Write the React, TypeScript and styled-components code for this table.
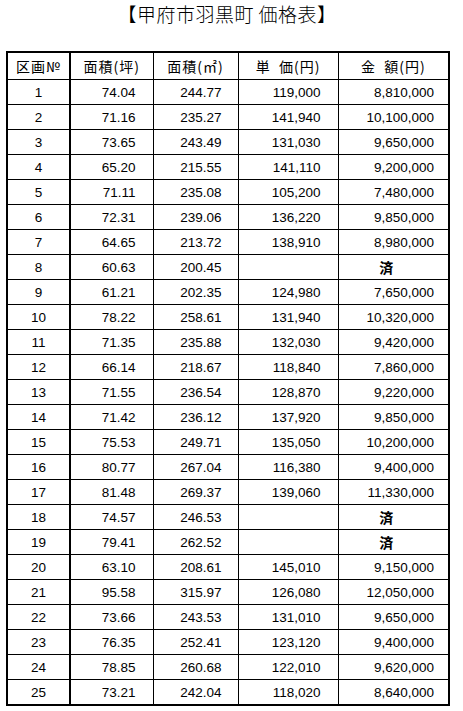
import styled, { createGlobalStyle } from 'styled-components';

interface Lot {
  no: number;
  tsubo: string;
  sqm: string;
  unit: string;
  total: string;
}

const lots: Lot[] = [
  { no: 1, tsubo: '74.04', sqm: '244.77', unit: '119,000', total: '8,810,000' },
  { no: 2, tsubo: '71.16', sqm: '235.27', unit: '141,940', total: '10,100,000' },
  { no: 3, tsubo: '73.65', sqm: '243.49', unit: '131,030', total: '9,650,000' },
  { no: 4, tsubo: '65.20', sqm: '215.55', unit: '141,110', total: '9,200,000' },
  { no: 5, tsubo: '71.11', sqm: '235.08', unit: '105,200', total: '7,480,000' },
  { no: 6, tsubo: '72.31', sqm: '239.06', unit: '136,220', total: '9,850,000' },
  { no: 7, tsubo: '64.65', sqm: '213.72', unit: '138,910', total: '8,980,000' },
  { no: 8, tsubo: '60.63', sqm: '200.45', unit: '', total: '' },
  { no: 9, tsubo: '61.21', sqm: '202.35', unit: '124,980', total: '7,650,000' },
  { no: 10, tsubo: '78.22', sqm: '258.61', unit: '131,940', total: '10,320,000' },
  { no: 11, tsubo: '71.35', sqm: '235.88', unit: '132,030', total: '9,420,000' },
  { no: 12, tsubo: '66.14', sqm: '218.67', unit: '118,840', total: '7,860,000' },
  { no: 13, tsubo: '71.55', sqm: '236.54', unit: '128,870', total: '9,220,000' },
  { no: 14, tsubo: '71.42', sqm: '236.12', unit: '137,920', total: '9,850,000' },
  { no: 15, tsubo: '75.53', sqm: '249.71', unit: '135,050', total: '10,200,000' },
  { no: 16, tsubo: '80.77', sqm: '267.04', unit: '116,380', total: '9,400,000' },
  { no: 17, tsubo: '81.48', sqm: '269.37', unit: '139,060', total: '11,330,000' },
  { no: 18, tsubo: '74.57', sqm: '246.53', unit: '', total: '' },
  { no: 19, tsubo: '79.41', sqm: '262.52', unit: '', total: '' },
  { no: 20, tsubo: '63.10', sqm: '208.61', unit: '145,010', total: '9,150,000' },
  { no: 21, tsubo: '95.58', sqm: '315.97', unit: '126,080', total: '12,050,000' },
  { no: 22, tsubo: '73.66', sqm: '243.53', unit: '131,010', total: '9,650,000' },
  { no: 23, tsubo: '76.35', sqm: '252.41', unit: '123,120', total: '9,400,000' },
  { no: 24, tsubo: '78.85', sqm: '260.68', unit: '122,010', total: '9,620,000' },
  { no: 25, tsubo: '73.21', sqm: '242.04', unit: '118,020', total: '8,640,000' },
];

const GlobalStyle = createGlobalStyle`
  html, body {
    margin: 0;
    padding: 0;
    background: #ffffff;
  }
`;

const Page = styled.div`
  width: 463px;
  padding: 0 0 0 6px;
  box-sizing: border-box;
  font-family: "Noto Sans CJK JP", "Liberation Sans", sans-serif;
  color: #000;
`;

const Title = styled.h1`
  width: 442px;
  margin: 0 0 23px;
  height: 28px;
  line-height: 28px;
  text-align: center;
  font-size: 19px;
  font-weight: 300;
  letter-spacing: 0.5px;
`;

const Table = styled.table`
  width: 442px;
  table-layout: fixed;
  border-collapse: collapse;
  border: 2px solid #000;
`;

const HeadCell = styled.th<{ $first?: boolean }>`
  height: 26px;
  padding: 0;
  border: 1px solid #000;
  border-right-width: ${p => (p.$first ? '2px' : '1px')};
  font-size: 14px;
  font-weight: 400;
  letter-spacing: 1px;
  text-align: center;
  white-space: pre;
`;

const Cell = styled.td<{ $first?: boolean; $pad?: number }>`
  height: 24px;
  padding: 0 ${p => (p.$pad ?? 0)}px 0 0;
  border: 1px solid #000;
  border-right-width: ${p => (p.$first ? '2px' : '1px')};
  font-family: "Liberation Sans", sans-serif;
  font-size: 13.5px;
  text-align: ${p => (p.$first ? 'center' : 'right')};
  white-space: nowrap;
`;

const SoldCell = styled.td`
  height: 24px;
  padding: 0 14px 0 0;
  border: 1px solid #000;
  font-size: 14px;
  font-weight: 700;
  text-align: center;
`;

const App = () => {
  return (
    <>
      <GlobalStyle />
      <Page>
        <Title>【甲府市羽黒町 価格表】</Title>
        <Table>
          <colgroup>
            <col style={{ width: 63 }} />
            <col style={{ width: 83 }} />
            <col style={{ width: 85 }} />
            <col style={{ width: 100 }} />
            <col style={{ width: 111 }} />
          </colgroup>
          <thead>
            <tr>
              <HeadCell $first>区画№</HeadCell>
              <HeadCell>面積(坪)</HeadCell>
              <HeadCell>面積(㎡)</HeadCell>
              <HeadCell>{'単  価(円)'}</HeadCell>
              <HeadCell>{'金  額(円)'}</HeadCell>
            </tr>
          </thead>
          <tbody>
            {lots.map(lot => (
              <tr key={lot.no}>
                <Cell $first>{lot.no}</Cell>
                <Cell $pad={17}>{lot.tsubo}</Cell>
                <Cell $pad={16}>{lot.sqm}</Cell>
                <Cell $pad={17}>{lot.unit}</Cell>
                {lot.total ? <Cell $pad={14}>{lot.total}</Cell> : <SoldCell>済</SoldCell>}
              </tr>
            ))}
          </tbody>
        </Table>
      </Page>
    </>
  );
};

export default App;
